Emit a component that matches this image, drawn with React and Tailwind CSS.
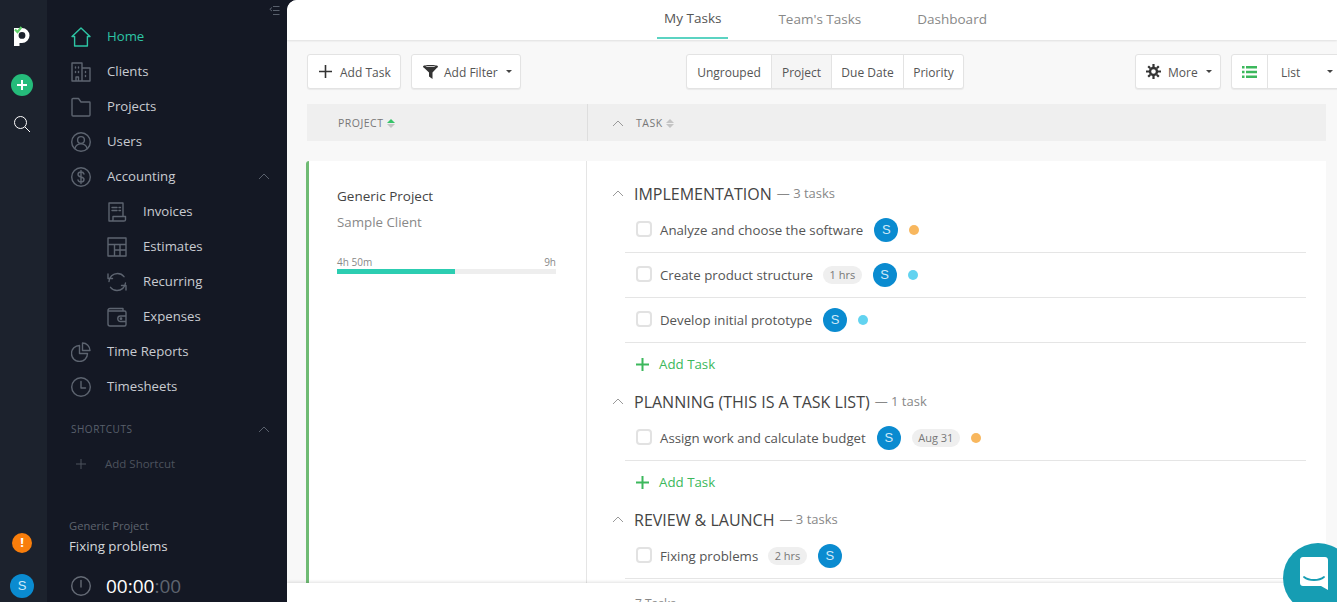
import { Fragment } from 'react'

const Icon = ({ className = '', size = 20, sw = 1.4, children }) => (
  <svg width={size} height={size} viewBox="0 0 20 20" fill="none" stroke="currentColor" strokeWidth={sw} strokeLinecap="round" strokeLinejoin="round" className={`shrink-0 ${className}`}>
    {children}
  </svg>
)

const HomeIcon = () => <Icon><path d="M1 9.500 10 1l9 8.500h-2.600V19H3.600V9.500Z" /></Icon>
const ClientsIcon = () => <Icon><path d="M1 19V1h10v18M11 6h8v13H1M5 19v-4h2.500v4M4.500 5v1M7.500 5v1M4.500 9.500v1M7.500 9.500v1M14.500 9.500v1M14.500 13.500v1" /></Icon>
const ProjectsIcon = () => <Icon><path d="M1 18V2.500C1 1.800 1.500 1.500 2 1.500h5.500L10 5h8.500c.4 0 .5.300.5.600V18c0 .6-.4 1-1 1H2c-.6 0-1-.4-1-1Z" /></Icon>
const UsersIcon = () => <Icon><circle cx="10" cy="10" r="9.300" /><circle cx="10" cy="8" r="3.400" /><path d="M3.800 16.500c1-3 3.300-4.600 6.200-4.600s5.200 1.600 6.200 4.600" /></Icon>
const DollarIcon = () => <Icon><circle cx="10" cy="10" r="9.300" /><path d="M13 7c-.4-1.300-1.500-2-3-2-1.800 0-3 1-3 2.500S8.200 9.600 10 10s3 1 3 2.500S11.800 15 10 15c-1.600 0-2.700-.8-3-2.100M10 3.500v13" /></Icon>
const InvoiceIcon = () => <Icon><path d="M2 19V1h14v13.500M2 19h15c1 0 1.500-.6 1.500-1.200v-3.300H6v3.300C6 18.400 5.400 19 4.500 19M5 5.500h5M12 5.500h1.500M5 8.500h5M12 8.500h1.500" /></Icon>
const EstimateIcon = () => <Icon><path d="M1 1h18v18H1zM1 7.500h18M7.500 7.500V19M13 7.500V19M7.500 13h11.500" /></Icon>
const RecurringIcon = () => <Icon><path d="M2 9.500C2.300 5 5.800 1.500 10.500 1.500c2.700 0 5 1.200 6.500 3.200M18.500 11c-.4 4.300-4 7.500-8.500 7.500-2.700 0-5-1.200-6.500-3.200M1 2v4.500h4.500M19 18v-4.500h-4.500" /></Icon>
const WalletIcon = () => <Icon><path d="M16 4V1.500H3C1.800 1.500 1 2.300 1 3.500V17c0 1.100.9 2 2 2h14.500c.8 0 1.500-.7 1.500-1.500V5.500C19 4.700 18.300 4 17.500 4H2M19 9h-5.500a2.500 2.500 0 0 0 0 5.500H19" /><circle cx="14" cy="11.700" r=".7" /></Icon>
const PieIcon = () => <Icon><path d="M8.500 3.500a8 8 0 1 0 8 8h-8v-8ZM11.500 1v7.500H19A7.500 7.500 0 0 0 11.500 1Z" /></Icon>
const ClockIcon = () => <Icon><circle cx="10" cy="10" r="9.300" /><path d="M10 4.500V11h4.500" /></Icon>

const Chevron = ({ className = '' }) => (
  <svg width="12" height="7" viewBox="0 0 12 7" fill="none" stroke="currentColor" strokeWidth="1" className={className}>
    <path d="M1 6 6 1l5 5" />
  </svg>
)

const Caret = () => <span className="w-0 h-0 border-x-[3px] border-x-transparent border-t-[3.500px] border-t-[#444]" />

const SortArrows = ({ active }) => (
  <span className="flex flex-col gap-[1px] ml-[3px]">
    <span className={`w-0 h-0 border-x-[4px] border-x-transparent border-b-[4px] ${active ? 'border-b-[#36c46a]' : 'border-b-[#c4c4c4]'}`} />
    <span className="w-0 h-0 border-x-[4px] border-x-transparent border-t-[4px] border-t-[#c4c4c4]" />
  </span>
)

const NAV = [
  { label: 'Home', icon: HomeIcon, active: true },
  { label: 'Clients', icon: ClientsIcon },
  { label: 'Projects', icon: ProjectsIcon },
  { label: 'Users', icon: UsersIcon },
  { label: 'Accounting', icon: DollarIcon, open: true },
  { label: 'Invoices', icon: InvoiceIcon, sub: true },
  { label: 'Estimates', icon: EstimateIcon, sub: true },
  { label: 'Recurring', icon: RecurringIcon, sub: true },
  { label: 'Expenses', icon: WalletIcon, sub: true },
  { label: 'Time Reports', icon: PieIcon },
  { label: 'Timesheets', icon: ClockIcon },
]

const GROUPS = [
  {
    name: 'IMPLEMENTATION',
    count: '3 tasks',
    addTask: true,
    tasks: [
      { title: 'Analyze and choose the software', dot: 'bg-[#f8b75e]' },
      { title: 'Create product structure', pill: '1 hrs', dot: 'bg-[#62d3f0]' },
      { title: 'Develop initial prototype', dot: 'bg-[#62d3f0]' },
    ],
  },
  {
    name: 'PLANNING (THIS IS A TASK LIST)',
    count: '1 task',
    addTask: true,
    tasks: [{ title: 'Assign work and calculate budget', date: 'Aug 31', dot: 'bg-[#f8b75e]' }],
  },
  {
    name: 'REVIEW & LAUNCH',
    count: '3 tasks',
    tasks: [{ title: 'Fixing problems', pill: '2 hrs' }],
  },
]

const Avatar = () => (
  <span className="w-6 h-6 shrink-0 rounded-full bg-[#0a8bd0] text-[#cfe9f8] text-[13px] font-['Liberation_Sans',sans-serif] flex items-center justify-center">S</span>
)

const Pill = ({ children }) => (
  <span className="h-[18px] px-[6.500px] rounded-full bg-[#efefef] text-[#777] text-[11px] flex items-center">{children}</span>
)

function Rail() {
  return (
    <div className="w-[47px] h-full shrink-0 bg-[#1c222d] pr-[3px] flex flex-col items-center">
      <div className="relative mt-[25px] w-[16px] h-[21px]">
        <svg width="16" height="21" viewBox="0 0 16 21">
          <path fillRule="evenodd" fill="#fff" d="M0 3h8a7.500 7.500 0 0 1 0 15H5.500v3H0V3Zm8 4a3.300 3.300 0 1 0 0 6.800A3.300 3.300 0 0 0 8 7Z" />
          <path d="M1 4.500 3.500 7 7.500 2" stroke="#5fd06a" strokeWidth="2.200" fill="none" />
        </svg>
      </div>
      <span className="mt-[28px] w-[22px] h-[22px] rounded-full bg-[#25bb7a] flex items-center justify-center">
        <svg width="12" height="12" viewBox="0 0 12 12" stroke="#fff" strokeWidth="2"><path d="M6 1v10M1 6h10" /></svg>
      </span>
      <svg className="mt-[19px] text-white" width="18" height="18" viewBox="0 0 18 18" fill="none" stroke="currentColor" strokeWidth="1">
        <circle cx="7.500" cy="7.500" r="6" /><path d="m12 12 5 5" />
      </svg>
      <span className="mt-auto w-5 h-5 rounded-full bg-[#f97e0b] text-white text-[13px] font-bold flex items-center justify-center">!</span>
      <span className="mt-[21px] mb-[4px]"><Avatar /></span>
    </div>
  )
}

function Sidebar() {
  return (
    <div className="relative w-[240px] h-full shrink-0 bg-[#141824] pl-[24px] flex flex-col">
      <svg className="absolute top-[5px] right-[7px] text-[#59606c]" width="11" height="11" viewBox="0 0 11 11" fill="none" stroke="currentColor" strokeWidth="1">
        <path d="M4 1.500h6.500M4 5.500h6.500M4 9.500h6.500M3 2.500 .8 4.300 3 6" />
      </svg>
      <nav className="mt-[19px]">
        {NAV.map(({ label, icon: NavIcon, active, sub, open }) => (
          <div key={label} className={`h-[35px] flex items-center text-[13.200px] ${sub ? 'pl-[36px]' : ''} ${active ? 'text-[#2dc5a4]' : 'text-[#c8cbd1]'}`}>
            <span className={active ? 'text-[#2dc5a4]' : 'text-[#5d6470]'}><NavIcon /></span>
            <span className="ml-[16px]">{label}</span>
            {open && <Chevron className="ml-auto mr-[17px] text-[#59606c]" />}
          </div>
        ))}
      </nav>
      <div className="mt-[16px] h-[18px] flex items-center justify-between text-[10px] tracking-[0.5px] text-[#59606c]">
        SHORTCUTS
        <Chevron className="mr-[17px]" />
      </div>
      <div className="mt-[17px] h-[18px] flex items-center text-[11.500px] text-[#4c525d]">
        <svg className="ml-[5px]" width="10" height="10" viewBox="0 0 10 10" stroke="currentColor" strokeWidth="1"><path d="M5 0v10M0 5h10" /></svg>
        <span className="ml-[19px]">Add Shortcut</span>
      </div>
      <div className="mt-auto -ml-[2px]">
        <div className="text-[11.200px] leading-[18px] text-[#5e646f]">Generic Project</div>
        <div className="text-[13.300px] leading-[20px] mt-[1px] text-[#d5d7db]">Fixing problems</div>
        <div className="mt-[19px] mb-[5px] h-[22px] flex items-center">
          <span className="text-[#656b76] ml-[2px]">
            <Icon><circle cx="10" cy="10" r="9.300" /><path d="M10 4.500V11" /></Icon>
          </span>
          <span className="ml-[15px] text-[19px] text-white">00:00<span className="text-[#5e646f]">:00</span></span>
        </div>
      </div>
    </div>
  )
}

const ToolButton = ({ children, className = '' }) => (
  <div className={`h-[35px] shrink-0 whitespace-nowrap bg-white border border-[#e3e3e3] rounded-[3px] shadow-[0_1px_1px_rgba(0,0,0,0.06)] flex items-center text-[12px] leading-[18px] text-[#555] ${className}`}>
    {children}
  </div>
)

function Toolbar() {
  return (
    <div className="h-[64px] shrink-0 pl-[20px] pt-[14px] flex items-start">
      <ToolButton className="w-[94px] pl-[11px]">
        <svg width="13" height="13" viewBox="0 0 13 13" stroke="#333" strokeWidth="1.600"><path d="M6.500 0v13M0 6.500h13" /></svg>
        <span className="ml-[8px] pt-[2px]">Add Task</span>
      </ToolButton>
      <ToolButton className="w-[110px] ml-[10px] pl-[11px]">
        <svg width="15" height="14" viewBox="0 0 15 14" fill="#333"><path d="M0 1.500C0 .5 3.500 0 7.500 0S15 .5 15 1.500c0 .7-.8 1.200-1.500 1.800L9.500 7.500V14L6 11.500v-4L1.500 3.300C.8 2.700 0 2.200 0 1.500Zm2.500.2c1.300.5 8.700.5 10 0-1.300-.5-8.700-.5-10 0Z" /></svg>
        <span className="ml-[6px] mr-[8px] pt-[2px]">Add Filter</span>
        <Caret />
      </ToolButton>
      <ToolButton className="ml-[165px] w-[278px]">
        <span className="h-full w-[84px] pt-[2px] flex items-center justify-center">Ungrouped</span>
        <span className="h-full w-[61px] pt-[2px] flex items-center justify-center border-x border-[#e3e3e3] bg-[#f5f5f5]">Project</span>
        <span className="h-full w-[71px] pt-[2px] flex items-center justify-center">Due Date</span>
        <span className="h-full flex-1 pt-[2px] flex items-center justify-center border-l border-[#e3e3e3]">Priority</span>
      </ToolButton>
      <ToolButton className="w-[86px] ml-[171px] pl-[10px]">
        <svg width="15" height="15" viewBox="0 0 15 15" fill="none" stroke="#333" strokeWidth="3">
          <circle cx="7.500" cy="7.500" r="3.500" strokeWidth="2.400" />
          <path strokeWidth="2.200" d="M7.500 0v3M7.500 12v3M0 7.500h3M12 7.500h3M2.200 2.200l2 2M10.800 10.800l2 2M2.200 12.800l2-2M10.800 4.200l2-2" />
        </svg>
        <span className="ml-[7px] mr-[8px] pt-[2px]">More</span>
        <Caret />
      </ToolButton>
      <ToolButton className="w-[115px] ml-[10px]">
        <span className="w-[36px] h-full flex items-center justify-center border-r border-[#e3e3e3]">
          <svg width="15" height="12" viewBox="0 0 15 12" fill="#3cb85c">
            <path d="M0 0h2.500v2.500H0zM4 0h11v2.500H4zM0 4.700h2.500v2.500H0zM4 4.700h11v2.500H4zM0 9.400h2.500V12H0zM4 9.400h11V12H4z" />
          </svg>
        </span>
        <span className="ml-[13px] pt-[2px]">List</span>
        <span className="ml-[27px] flex"><Caret /></span>
      </ToolButton>
    </div>
  )
}

function TableHeader() {
  return (
    <div className="h-[37px] shrink-0 ml-[20px] mr-[11px] bg-[#efefef] flex text-[10.500px] tracking-[0.5px] text-[#777]">
      <div className="w-[281px] pl-[31px] pt-[2px] border-r border-[#dedede] flex items-center">
        PROJECT <SortArrows active />
      </div>
      <div className="pl-[24px] pt-[2px] flex items-center">
        <Chevron className="text-[#999]" />
        <span className="ml-[12px]">TASK</span>
        <SortArrows />
      </div>
    </div>
  )
}

function TaskRow({ task }) {
  return (
    <div className="h-[45px] ml-[38px] pl-[11px] border-b border-[#e5e5e5] flex items-center text-[13.250px] text-[#555]">
      <span className="w-4 h-4 -mt-[2px] rounded-[4px] border-2 border-[#e2e2e2]" />
      <span className="ml-[8px] pt-[1px]">{task.title}</span>
      {task.pill && <span className="ml-[10px]"><Pill>{task.pill}</Pill></span>}
      <span className="ml-[11px]"><Avatar /></span>
      {task.date && <span className="ml-[11px]"><Pill>{task.date}</Pill></span>}
      {task.dot && <span className={`ml-[11px] w-[10px] h-[10px] rounded-full ${task.dot}`} />}
    </div>
  )
}

function TaskGroup({ group }) {
  return (
    <Fragment>
      <div className="h-[31px] pt-[2px] flex items-center">
        <Chevron className="text-[#999] ml-[25px]" />
        <span className="ml-[10px] text-[16px] text-[#444]">{group.name}</span>
        <span className="ml-[5px] text-[13px] text-[#888]">— {group.count}</span>
      </div>
      {group.tasks.map((t) => <TaskRow key={t.title} task={t} />)}
      {group.addTask && (
        <div className="h-[42px] ml-[49px] flex items-center text-[13.300px] text-[#3cb85c]">
          <svg width="13" height="13" viewBox="0 0 13 13" stroke="currentColor" strokeWidth="2"><path d="M6.500 0v13M0 6.500h13" /></svg>
          <span className="ml-[10px] pt-[1px]">Add Task</span>
        </div>
      )}
    </Fragment>
  )
}

function Board() {
  return (
    <div className="flex-1 min-h-0 mt-[20px] ml-[19px] mr-[11px] flex bg-white border-l-[3px] border-[#6fbb74] rounded-tl-[3px] overflow-hidden">
      <div className="w-[278px] shrink-0 border-r border-[#e5e5e5] pl-[28px] pr-[30px] pt-[25px]">
        <div className="text-[13.500px] leading-[20px] text-[#444]">Generic Project</div>
        <div className="mt-[6px] text-[13.300px] leading-[20px] text-[#888]">Sample Client</div>
        <div className="mt-[23px] flex justify-between text-[10px] leading-[14px] text-[#888]">
          <span>4h 50m</span>
          <span>9h</span>
        </div>
        <div className="h-[5px] bg-[#eeeeee]">
          <div className="h-full bg-[#2ccdb1] w-[54%]" />
        </div>
      </div>
      <div className="flex-1 min-w-0 pt-[16px] pr-[20px]">
        {GROUPS.map((g) => <TaskGroup key={g.name} group={g} />)}
      </div>
    </div>
  )
}

export default function App() {
  return (
    <div className="relative w-[1337px] h-[602px] overflow-hidden flex bg-[#141824] font-['Open_Sans',sans-serif]">
      <Rail />
      <Sidebar />
      <main className="relative flex-1 min-w-0 h-full bg-[#f8f8f8] rounded-tl-[10px] overflow-hidden flex flex-col">
        <div className="h-[40px] shrink-0 bg-white pl-[20px] shadow-[0_1px_2px_rgba(0,0,0,0.1)] flex justify-center text-[13.500px] text-[#888]">
          <div className="px-[7px] h-[39px] flex items-center border-b-2 border-[#5bd3c2] text-[#555]">My Tasks</div>
          <div className="ml-[50px] h-[39px] flex items-center">Team's Tasks</div>
          <div className="ml-[56px] h-[39px] flex items-center">Dashboard</div>
        </div>
        <Toolbar />
        <TableHeader />
        <Board />
        <div className="h-[19px] shrink-0 bg-white shadow-[0_-1px_3px_rgba(0,0,0,0.12)] z-10 pl-[348px] pt-[13px] text-[12px] leading-[16px] text-[#888] overflow-hidden">7 Tasks</div>
        <div className="absolute left-[996px] top-[543px] w-[70px] h-[70px] rounded-full bg-[#169db3] z-20 flex items-start justify-start pl-[17px] pt-[14px]">
          <svg width="28" height="33" viewBox="0 0 28 33">
            <path fill="#fff" d="M3 0h22c1.700 0 3 1.300 3 3v30l-7-4H3c-1.700 0-3-1.300-3-3V3c0-1.700 1.300-3 3-3Z" />
            <path d="M4 20c5 4 15 4 20 0" stroke="#169db3" strokeWidth="1.800" fill="none" strokeLinecap="round" />
          </svg>
        </div>
      </main>
    </div>
  )
}
